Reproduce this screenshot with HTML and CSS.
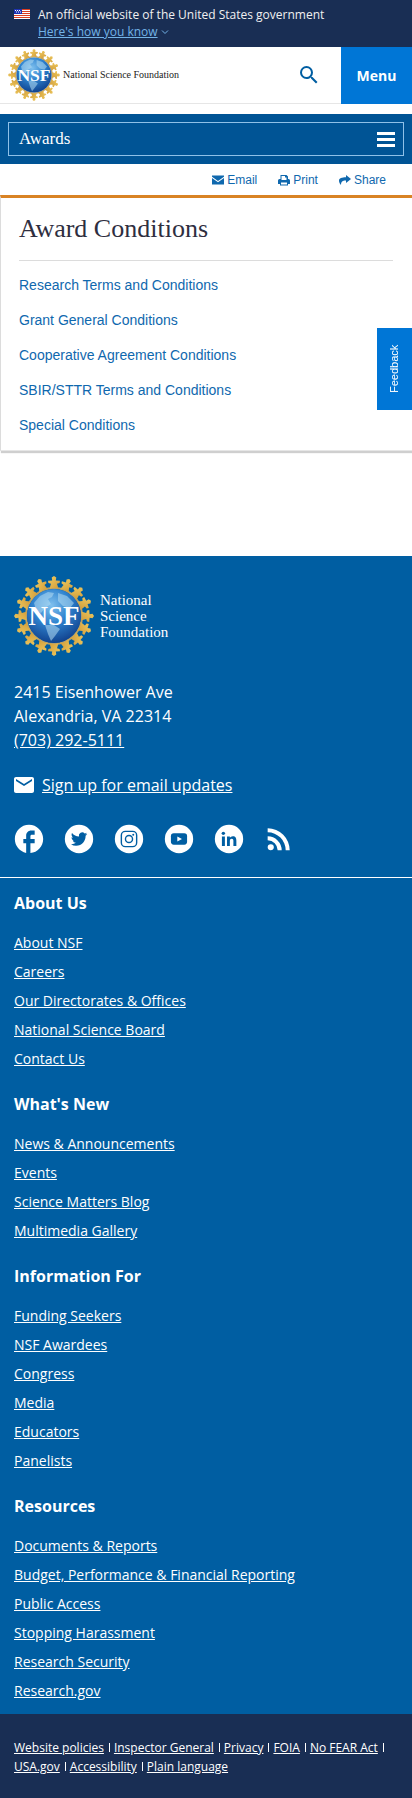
FILE: index.html
```html
<!DOCTYPE html>
<html lang="en">
<head>
<meta charset="utf-8">
<meta name="viewport" content="width=device-width, initial-scale=1">
<title>Award Conditions | NSF - National Science Foundation</title>
<link rel="stylesheet" href="styles.css">
</head>
<body>
<svg class="sprite" width="0" height="0" aria-hidden="true">
  <defs>
    <radialGradient id="globe" cx="0.45" cy="0.3" r="0.75">
      <stop offset="0" stop-color="#7fc0ee"/>
      <stop offset="0.45" stop-color="#2f83cf"/>
      <stop offset="1" stop-color="#0d3a86"/>
    </radialGradient>
    <linearGradient id="gold" x1="0" y1="0" x2="1" y2="1">
      <stop offset="0" stop-color="#f0cd62"/>
      <stop offset="1" stop-color="#d09a38"/>
    </linearGradient>
    <g id="person">
      <path d="M0 -40 L2.300 -38.500 L1.800 -35.600 L6 -35.200 L5.600 -33 L3 -32.200 L4.600 -27 L1.500 -28 L-1.500 -28 L-4.600 -27 L-3 -32.200 L-5.600 -33 L-6 -35.200 L-1.800 -35.600 L-2.300 -38.500Z"/>
    </g>
    <symbol id="nsf-logo" viewBox="-40 -40 80 80">
      <circle r="28" fill="none" stroke="#b5a069" stroke-width="2"/>
      <circle r="27" fill="url(#globe)"/>
      <path d="M-20 -13 L-14 -20 L-6 -24 L0 -23 L-2 -19 L-6 -17 L-3 -12 L-9 -8 L-13 -3 L-18 -6Z M4 -23 L13 -20 L20 -13 L16 -8 L9 -10 L4 -15Z M-9 9 L0 9 L6 13 L1 20 L-3 25 L-6 18Z" fill="#b4dcf2" opacity=".55"/>
      <g fill="url(#gold)">
        <use href="#person"/>
        <use href="#person" transform="rotate(22.5)"/>
        <use href="#person" transform="rotate(45)"/>
        <use href="#person" transform="rotate(67.5)"/>
        <use href="#person" transform="rotate(90)"/>
        <use href="#person" transform="rotate(112.5)"/>
        <use href="#person" transform="rotate(135)"/>
        <use href="#person" transform="rotate(157.5)"/>
        <use href="#person" transform="rotate(180)"/>
        <use href="#person" transform="rotate(202.5)"/>
        <use href="#person" transform="rotate(225)"/>
        <use href="#person" transform="rotate(247.5)"/>
        <use href="#person" transform="rotate(270)"/>
        <use href="#person" transform="rotate(292.5)"/>
        <use href="#person" transform="rotate(315)"/>
        <use href="#person" transform="rotate(337.5)"/>
      </g>
      <text class="logo-letters" x="0" y="9" text-anchor="middle">NSF</text>
    </symbol>
  </defs>
</svg>

<section class="banner" aria-label="Official government website">
  <svg class="flag" viewBox="0 0 16 10" aria-hidden="true">
    <path fill="#fff" d="M0 0h16v10H0z"/>
    <path fill="#db3e1f" d="M0 0h16v1H0zM0 2h16v1H0zM0 4h16v1H0zM0 6h16v1H0zM0 8h16v1H0z"/>
    <path fill="#1e33b1" d="M0 0h8v5H0z"/>
    <path fill="#fff" d="M1 1h1v1H1zM3 1h1v1H3zM5 1h1v1H5zM2 2.500h1v1H2zM4 2.500h1v1H4zM6 2.500h1v1H6z"/>
  </svg>
  <div>
    <p class="banner-text">An official website of the United States government</p>
    <button class="banner-button" type="button"><span class="banner-label">Here's how you know</span><svg class="chevron" viewBox="0 0 8 6" aria-hidden="true"><path d="M1 1.500l3 3 3-3"/></svg></button>
  </div>
</section>

<header class="header">
  <a class="brand" href="#home">
    <svg class="brand-seal" aria-hidden="true"><use href="#nsf-logo"/></svg>
    <span>National Science Foundation</span>
  </a>
  <button class="search" type="button" aria-label="Search">
    <svg viewBox="0 0 24 24" aria-hidden="true"><path d="M15.500 14h-.79l-.28-.27A6.470 6.470 0 0 0 16 9.500 6.500 6.500 0 1 0 9.500 16c1.610 0 3.090-.59 4.230-1.570l.27.28v.79l5 4.990L20.490 19l-4.990-5zm-6 0C7.010 14 5 11.990 5 9.500S7.010 5 9.500 5 14 7.010 14 9.500 11.990 14 9.500 14z"/></svg>
  </button>
  <button class="menu" type="button">Menu</button>
</header>

<nav class="section-bar" aria-label="Awards">
  <button class="section-toggle" type="button">
    <span>Awards</span>
    <svg viewBox="0 0 18 15" aria-hidden="true"><path d="M0 0h18v3H0zM0 6h18v3H0zM0 12h18v3H0z"/></svg>
  </button>
</nav>

<main>
  <div class="tools">
    <a href="#email"><svg viewBox="0 0 12 12" aria-hidden="true"><path d="M0 1.500h12v1.300L6 7 0 2.800z"/><path d="M0 4.100L6 8.300l6-4.200v6.400H0z"/></svg>Email</a>
    <a href="#print"><svg viewBox="0 0 12 12" aria-hidden="true"><path fill-rule="evenodd" d="M2.500 1h6L10 2.500V5h.5Q12 5 12 6.500V10h-2v1.500H2V10H0V6.500Q0 5 1.500 5h1zM3.500 2v4h5V3.500H7V2zM3 8.500v2h6v-2z"/></svg>Print</a>
    <a href="#share"><svg viewBox="0 0 12 12" aria-hidden="true"><path d="M7 1l5 4-5 4V6.600C4 6.500 2 7.300 2 11 .8 9.800 0 8.200 0 6.800 0 4.200 3 3.300 7 3.300z"/></svg>Share</a>
  </div>
  <article class="card">
    <h1>Award Conditions</h1>
    <ul class="conditions">
      <li><a href="#research">Research Terms and Conditions</a></li>
      <li><a href="#grant">Grant General Conditions</a></li>
      <li><a href="#cooperative">Cooperative Agreement Conditions</a></li>
      <li><a href="#sbir">SBIR/STTR Terms and Conditions</a></li>
      <li><a href="#special">Special Conditions</a></li>
    </ul>
  </article>
</main>

<button class="feedback" type="button">Feedback</button>

<footer class="footer">
  <div class="contact">
    <a class="footer-brand" href="#home">
      <svg class="footer-seal" aria-hidden="true"><use href="#nsf-logo"/></svg>
      <span>National<br>Science<br>Foundation</span>
    </a>
    <address>2415 Eisenhower Ave<br>Alexandria, VA 22314<br><a href="tel:7032925111">(703) 292-5111</a></address>
    <div class="signup">
      <svg viewBox="2 4 20 16" aria-hidden="true"><path d="M20 4H4c-1.100 0-1.990.9-1.990 2L2 18c0 1.100.9 2 2 2h16c1.100 0 2-.9 2-2V6c0-1.100-.9-2-2-2zm0 4l-8 5-8-5V6l8 5 8-5v2z"/></svg>
      <a href="#signup">Sign up for email updates</a>
    </div>
    <div class="social">
      <a href="#facebook" aria-label="Facebook"><svg viewBox="0 0 24 24"><path d="M22 12c0-5.520-4.480-10-10-10S2 6.480 2 12c0 4.840 3.440 8.870 8 9.800V15H8v-3h2V9.500C10 7.570 11.570 6 13.500 6H16v3h-2c-.55 0-1 .45-1 1v2h3v3h-3v6.950c5.050-.5 9-4.760 9-9.950z"/></svg></a>
      <a href="#twitter" aria-label="Twitter"><svg viewBox="0 0 24 24"><circle cx="12" cy="12" r="10"/><path class="cut" transform="translate(6.300 6.300) scale(.48)" d="M23.950 4.570a10 10 0 0 1-2.820.77 4.960 4.960 0 0 0 2.160-2.720c-.95.55-2 .95-3.130 1.180a4.920 4.920 0 0 0-8.380 4.480C7.690 8.090 4.070 6.130 1.640 3.160a4.820 4.820 0 0 0-.67 2.480c0 1.710.87 3.210 2.190 4.100a4.900 4.900 0 0 1-2.230-.62v.06a4.920 4.920 0 0 0 3.950 4.830 5 5 0 0 1-2.210.08 4.940 4.940 0 0 0 4.600 3.420A9.870 9.870 0 0 1 0 19.540a13.990 13.990 0 0 0 7.550 2.210c9.050 0 14-7.500 14-13.990 0-.21 0-.42-.02-.63a9.940 9.940 0 0 0 2.420-2.560z"/></svg></a>
      <a href="#instagram" aria-label="Instagram"><svg viewBox="0 0 24 24"><circle cx="12" cy="12" r="10"/><g class="cut-line"><rect x="6.600" y="6.600" width="10.800" height="10.800" rx="2.800"/><circle cx="12" cy="12" r="2.500"/></g><circle class="cut" cx="15" cy="9" r=".7"/></svg></a>
      <a href="#youtube" aria-label="YouTube"><svg viewBox="0 0 24 24"><circle cx="12" cy="12" r="10"/><rect class="cut" x="6.300" y="8" width="11.400" height="8" rx="2"/><path d="M10.800 10.200l3.300 1.800-3.300 1.800z"/></svg></a>
      <a href="#linkedin" aria-label="LinkedIn"><svg viewBox="0 0 24 24"><circle cx="12" cy="12" r="10"/><path class="cut" d="M7 10.200h2.100V17H7zM10.600 10.200h2v1c.4-.7 1.200-1.200 2.100-1.200 2 0 2.500 1.300 2.500 3.200V17h-2.100v-3.400c0-.9-.1-1.800-1.200-1.800s-1.300.8-1.300 1.700V17h-2z"/><circle class="cut" cx="8" cy="8" r="1.200"/></svg></a>
      <a href="#rss" aria-label="RSS"><svg viewBox="0 0 24 24"><path d="M6.180 15.640a2.180 2.180 0 0 1 2.180 2.180C8.360 19 7.380 20 6.180 20 5 20 4 19 4 17.820a2.180 2.180 0 0 1 2.180-2.180M4 4.440A15.560 15.560 0 0 1 19.560 20h-2.830A12.730 12.730 0 0 0 4 7.270V4.440m0 5.660a9.900 9.900 0 0 1 9.900 9.900h-2.830A7.070 7.070 0 0 0 4 12.930V10.100z"/></svg></a>
    </div>
  </div>
  <nav class="footer-nav" aria-label="Footer">
    <section>
      <h2>About Us</h2>
      <ul>
        <li><a href="#about">About NSF</a></li>
        <li><a href="#careers">Careers</a></li>
        <li><a href="#directorates">Our Directorates &amp; Offices</a></li>
        <li><a href="#board">National Science Board</a></li>
        <li><a href="#contact">Contact Us</a></li>
      </ul>
    </section>
    <section>
      <h2>What's New</h2>
      <ul>
        <li><a href="#news">News &amp; Announcements</a></li>
        <li><a href="#events">Events</a></li>
        <li><a href="#blog">Science Matters Blog</a></li>
        <li><a href="#multimedia">Multimedia Gallery</a></li>
      </ul>
    </section>
    <section>
      <h2>Information For</h2>
      <ul>
        <li><a href="#seekers">Funding Seekers</a></li>
        <li><a href="#awardees">NSF Awardees</a></li>
        <li><a href="#congress">Congress</a></li>
        <li><a href="#media">Media</a></li>
        <li><a href="#educators">Educators</a></li>
        <li><a href="#panelists">Panelists</a></li>
      </ul>
    </section>
    <section>
      <h2>Resources</h2>
      <ul>
        <li><a href="#documents">Documents &amp; Reports</a></li>
        <li><a href="#budget">Budget, Performance &amp; Financial Reporting</a></li>
        <li><a href="#public">Public Access</a></li>
        <li><a href="#harassment">Stopping Harassment</a></li>
        <li><a href="#security">Research Security</a></li>
        <li><a href="#gov">Research.gov</a></li>
      </ul>
    </section>
  </nav>
  <ul class="legal">
    <li><a href="#policies">Website policies</a></li>
    <li><a href="#inspector">Inspector General</a></li>
    <li><a href="#privacy">Privacy</a></li>
    <li><a href="#foia">FOIA</a></li>
    <li><a href="#nofear">No FEAR Act</a></li>
    <li><a href="#usa">USA.gov</a></li>
    <li><a href="#accessibility">Accessibility</a></li>
    <li><a href="#plain">Plain language</a></li>
  </ul>
</footer>
</body>
</html>
```
FILE: styles.css
```css
* {
  box-sizing: border-box;
}

body {
  margin: 0;
  background: #fff;
  color: #1b1b1b;
  font-family: "Open Sans", "Noto Sans", sans-serif;
  font-size: 16px;
  line-height: 24px;
}

h1, h2, p, ul {
  margin: 0;
  padding: 0;
}

ul {
  list-style: none;
}

button {
  margin: 0;
  padding: 0;
  border: 0;
  background: none;
  font: inherit;
  cursor: pointer;
}

svg {
  display: block;
}

.sprite {
  position: absolute;
}

.logo-letters {
  fill: #fff;
  font-family: "Liberation Serif", serif;
  font-size: 27px;
  font-weight: 700;
}

/* Government banner */
.banner {
  display: flex;
  gap: 8px;
  padding: 6px 14px 7px;
  background: #192e54;
  color: #f0f0f0;
  font-size: 12px;
  line-height: 17px;
}

.flag {
  width: 16px;
  height: 10px;
  margin-top: 3px;
}

.banner-button {
  display: flex;
  align-items: center;
  gap: 3px;
  color: #73b3e7;
}

.banner-label {
  text-decoration: underline;
}

.chevron {
  width: 8px;
  height: 6px;
  fill: none;
  stroke: currentColor;
}

/* Site header */
.header {
  display: flex;
  height: 57px;
  border-bottom: 1px solid #e6e6e6;
}

.brand {
  display: flex;
  flex: 1;
  align-items: center;
  gap: 3px;
  padding-left: 8px;
  color: #1b1b1b;
  font-family: "Liberation Serif", serif;
  font-size: 10px;
  text-decoration: none;
}

.brand-seal {
  width: 52px;
  height: 52px;
}

.search {
  width: 64px;
  display: grid;
  place-items: center;
}

.search svg {
  width: 24px;
  height: 24px;
  fill: #005ea2;
}

.menu {
  width: 71px;
  margin-bottom: -1px;
  background: #0076d6;
  color: #fff;
  font-size: 14px;
  font-weight: 700;
}

/* Section bar */
.section-bar {
  margin-top: 10px;
  padding: 8px;
  background: #005495;
}

.section-toggle {
  display: flex;
  align-items: center;
  justify-content: space-between;
  width: 100%;
  height: 34px;
  padding: 0 8px 0 10px;
  border: 1px solid #8fc1e8;
  color: #fff;
  font-family: "Liberation Serif", serif;
  font-size: 17px;
}

.section-toggle svg {
  width: 18px;
  height: 15px;
  fill: #fff;
}

/* Page content */
.tools {
  display: flex;
  justify-content: flex-end;
  gap: 21px;
  padding: 4px 26px 3px;
  font-family: "Liberation Sans", sans-serif;
  font-size: 12px;
}

.tools a {
  display: flex;
  align-items: center;
  gap: 3px;
  color: #0f68ae;
  text-decoration: none;
}

.tools svg {
  width: 12px;
  height: 12px;
  fill: currentColor;
}

.card {
  padding: 13px 19px 7px 18px;
  border-top: 3px solid #d98324;
  border-left: 1px solid #dcdcdc;
  border-bottom: 1px solid #e6e6e6;
  box-shadow: 1px 2px 1px #cfcfcf;
}

.card h1 {
  padding-bottom: 13px;
  border-bottom: 1px solid #dcdcdc;
  color: #2e2e40;
  font-family: "Liberation Serif", serif;
  font-size: 26px;
  font-weight: 400;
  line-height: 36px;
}

.conditions {
  padding-top: 7px;
  font-family: "Liberation Sans", sans-serif;
  font-size: 14px;
  line-height: 35px;
}

.conditions a {
  color: #0f68ae;
  text-decoration: none;
}

.feedback {
  position: fixed;
  top: 328px;
  right: 0;
  width: 35px;
  height: 82px;
  background: #0076d6;
  color: #fff;
  font-family: "Liberation Sans", sans-serif;
  font-size: 11px;
  writing-mode: vertical-rl;
  transform: rotate(180deg);
}

/* Footer */
.footer {
  margin-top: 105px;
  background: #005ea2;
  color: #fff;
}

.footer a {
  color: inherit;
}

.contact {
  padding: 20px 14px 21px;
  border-bottom: 1px solid #fff;
}

.footer .footer-brand {
  display: flex;
  align-items: center;
  gap: 6px;
  font-family: "Liberation Serif", serif;
  font-size: 15px;
  line-height: 16px;
  text-decoration: none;
}

.footer-seal {
  width: 80px;
  height: 80px;
}

address {
  margin-top: 24px;
  font-style: normal;
}

.signup {
  display: flex;
  align-items: center;
  gap: 8px;
  margin-top: 21px;
}

.signup svg {
  width: 20px;
  height: 16px;
  fill: #fff;
}

.social {
  display: flex;
  gap: 16px;
  margin: 25px -2px 0;
}

.social svg {
  width: 34px;
  height: 34px;
  fill: #fff;
}

.social .cut {
  fill: #005ea2;
}

.social .cut-line {
  fill: none;
  stroke: #005ea2;
}

.footer-nav {
  display: grid;
  gap: 19px;
  padding: 13px 14px 9px;
}

.footer-nav h2 {
  margin-bottom: 13px;
  font-size: 16px;
  line-height: 24px;
}

.footer-nav ul {
  font-size: 14px;
  line-height: 29px;
}

.legal {
  display: flex;
  flex-wrap: wrap;
  padding: 24px 14px 22px;
  background: #192e54;
  font-size: 12px;
  line-height: 19px;
}

.legal li {
  display: flex;
  align-items: center;
}

.legal li:not(:last-child)::after {
  content: "";
  width: 1px;
  height: 9px;
  margin: 0 4px 0 5px;
  background: #fff;
}
```
